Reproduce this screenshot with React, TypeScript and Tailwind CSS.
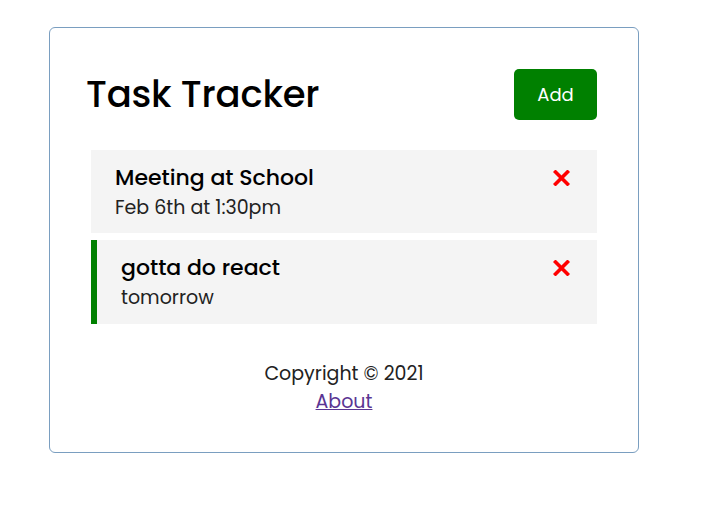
import React from 'react'

interface Task {
  id: number
  text: string
  day: string
  reminder: boolean
}

const tasks: Task[] = [
  { id: 1, text: 'Meeting at School', day: 'Feb 6th at 1:30pm', reminder: false },
  { id: 2, text: 'gotta do react', day: 'tomorrow', reminder: true },
]

const Cross = () => (
  <svg width="17" height="16" viewBox="0 0 17 16" className="shrink-0">
    <path d="M2.5 2 L14.5 14 M14.5 2 L2.5 14" stroke="#ff0000" strokeWidth="3.6" strokeLinecap="square" />
  </svg>
)

const TaskRow: React.FC<{ task: Task }> = ({ task }) => (
  <div
    className={
      task.reminder
        ? 'bg-[#f4f4f4] h-[84px] border-l-[6px] border-[#008000] pl-[24px] pr-[27px] pt-[12px]'
        : 'bg-[#f4f4f4] h-[83px] pl-[24px] pr-[27px] pt-[12px]'
    }
  >
    <h3 className="flex items-center justify-between text-[22px] font-medium leading-[32px] text-black">
      {task.text}
      <Cross />
    </h3>
    <p className="text-[19px] leading-[28px] text-[#222]">{task.day}</p>
  </div>
)

export default function App() {
  return (
    <div className="min-h-[520px] bg-white pt-[27px] pl-[49px]" style={{ fontFamily: 'Poppins, Inter, sans-serif' }}>
      <div className="w-[590px] h-[426px] border border-[#7a9ec0] rounded-[6px] px-[35px] pt-[35px]">
        <header className="flex items-center justify-between h-[63px] mb-[24px] pl-[1px]">
          <h1 className="text-[37px] font-medium leading-none text-black tracking-[-0.2px]">Task Tracker</h1>
          <button className="w-[83px] h-[51px] mr-[6px] bg-[#008000] text-white text-[18px] rounded-[5px]">
            Add
          </button>
        </header>
        <div className="flex flex-col gap-[7px] mx-[6px]">
          {tasks.map((t) => (
            <TaskRow key={t.id} task={t} />
          ))}
        </div>
        <footer className="mt-[36px] text-center text-[19px] text-[#222]">
          <p className="leading-[28px]">Copyright © 2021</p>
          <a href="#" className="leading-[28px] text-[#5b3593] underline">About</a>
        </footer>
      </div>
    </div>
  )
}
